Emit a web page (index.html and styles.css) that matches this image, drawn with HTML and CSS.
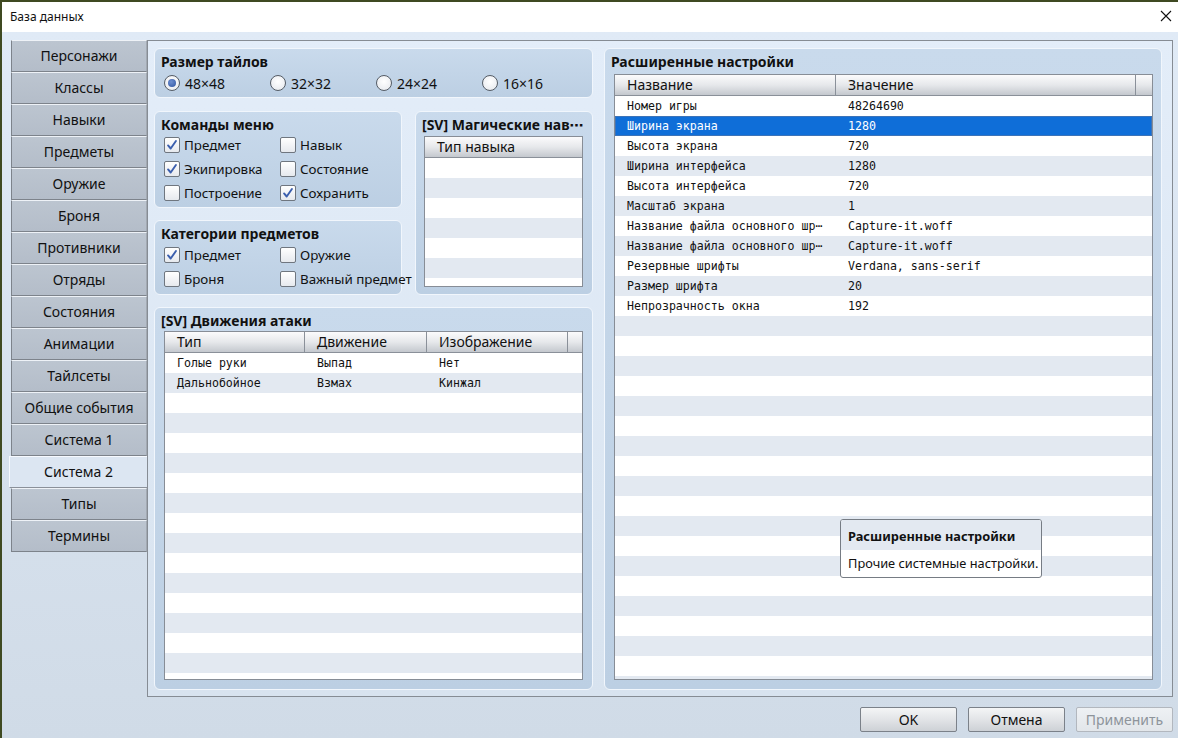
FILE: index.html
```html
<!DOCTYPE html>
<html lang="ru">
<head>
<meta charset="utf-8">
<title>База данных</title>
<link rel="stylesheet" href="styles.css">
</head>
<body>
<div class="window">
  <div class="titlebar">
    <span class="title">База данных</span>
    <svg class="close" width="12" height="12" viewBox="0 0 12 12"><path d="M1 1 L11 11 M11 1 L1 11" stroke="#111" stroke-width="1.1" fill="none"/></svg>
  </div>
  <div class="content">
    <div class="main">
      <div class="tabs">
        <div class="tab">Персонажи</div>
        <div class="tab">Классы</div>
        <div class="tab">Навыки</div>
        <div class="tab">Предметы</div>
        <div class="tab">Оружие</div>
        <div class="tab">Броня</div>
        <div class="tab">Противники</div>
        <div class="tab">Отряды</div>
        <div class="tab">Состояния</div>
        <div class="tab">Анимации</div>
        <div class="tab">Тайлсеты</div>
        <div class="tab">Общие события</div>
        <div class="tab">Система 1</div>
        <div class="tab active">Система 2</div>
        <div class="tab">Типы</div>
        <div class="tab">Термины</div>
      </div>
      <div class="panel">
        <div class="leftcol">
          <div class="group g-tiles">
            <div class="gtitle">Размер тайлов</div>
            <div class="radios">
              <label class="radio"><span class="rbox checked"></span>48×48</label>
              <label class="radio"><span class="rbox"></span>32×32</label>
              <label class="radio"><span class="rbox"></span>24×24</label>
              <label class="radio"><span class="rbox"></span>16×16</label>
            </div>
          </div>
          <div class="midrow">
            <div class="subcol">
              <div class="group g-menu">
                <div class="gtitle">Команды меню</div>
                <div class="checks tight">
                  <label class="check"><span class="cbox"><svg viewBox="0 0 16 16"><path d="M3.5 8.5 L6.5 12 L12.5 3.5"/></svg></span>Предмет</label>
                  <label class="check"><span class="cbox"></span>Навык</label>
                  <label class="check"><span class="cbox"><svg viewBox="0 0 16 16"><path d="M3.5 8.5 L6.5 12 L12.5 3.5"/></svg></span>Экипировка</label>
                  <label class="check"><span class="cbox"></span>Состояние</label>
                  <label class="check"><span class="cbox"></span>Построение</label>
                  <label class="check"><span class="cbox"><svg viewBox="0 0 16 16"><path d="M3.5 8.5 L6.5 12 L12.5 3.5"/></svg></span>Сохранить</label>
                </div>
              </div>
              <div class="group g-cats">
                <div class="gtitle">Категории предметов</div>
                <div class="checks">
                  <label class="check"><span class="cbox"><svg viewBox="0 0 16 16"><path d="M3.5 8.5 L6.5 12 L12.5 3.5"/></svg></span>Предмет</label>
                  <label class="check"><span class="cbox"></span>Оружие</label>
                  <label class="check"><span class="cbox"></span>Броня</label>
                  <label class="check"><span class="cbox"></span>Важный предмет</label>
                </div>
              </div>
            </div>
            <div class="group g-magic">
              <div class="gtitle">[SV] Магические нав⋯</div>
              <div class="table t-magic">
                <div class="thead"><div class="th">Тип навыка</div></div>
                <div class="tbody"></div>
              </div>
            </div>
          </div>
          <div class="group g-attack">
            <div class="gtitle">[SV] Движения атаки</div>
            <div class="table t-attack">
              <div class="thead">
                <div class="th">Тип</div>
                <div class="th">Движение</div>
                <div class="th">Изображение</div>
                <div class="th last"></div>
              </div>
              <div class="tbody">
                <div class="tr"><div class="td">Голые руки</div><div class="td">Выпад</div><div class="td">Нет</div><div class="td"></div></div>
                <div class="tr"><div class="td">Дальнобойное</div><div class="td">Взмах</div><div class="td">Кинжал</div><div class="td"></div></div>
              </div>
            </div>
          </div>
        </div>
        <div class="group g-adv">
          <div class="gtitle">Расширенные настройки</div>
          <div class="table t-adv">
            <div class="thead">
              <div class="th">Название</div>
              <div class="th">Значение</div>
              <div class="th last"></div>
            </div>
            <div class="tbody">
              <div class="tr"><div class="td">Номер игры</div><div class="td">48264690</div><div class="td"></div></div>
              <div class="tr selected"><div class="td">Ширина экрана</div><div class="td">1280</div><div class="td"></div></div>
              <div class="tr"><div class="td">Высота экрана</div><div class="td">720</div><div class="td"></div></div>
              <div class="tr"><div class="td">Ширина интерфейса</div><div class="td">1280</div><div class="td"></div></div>
              <div class="tr"><div class="td">Высота интерфейса</div><div class="td">720</div><div class="td"></div></div>
              <div class="tr"><div class="td">Масштаб экрана</div><div class="td">1</div><div class="td"></div></div>
              <div class="tr"><div class="td">Название файла основного шр⋯</div><div class="td">Capture-it.woff</div><div class="td"></div></div>
              <div class="tr"><div class="td">Название файла основного шр⋯</div><div class="td">Capture-it.woff</div><div class="td"></div></div>
              <div class="tr"><div class="td">Резервные шрифты</div><div class="td">Verdana, sans-serif</div><div class="td"></div></div>
              <div class="tr"><div class="td">Размер шрифта</div><div class="td">20</div><div class="td"></div></div>
              <div class="tr"><div class="td">Непрозрачность окна</div><div class="td">192</div><div class="td"></div></div>
            </div>
          </div>
          <div class="tooltip">
            <div class="tt-head">Расширенные настройки</div>
            <div class="tt-body">Прочие системные настройки.</div>
          </div>
        </div>
      </div>
    </div>
    <div class="buttons">
      <button class="btn">OK</button>
      <button class="btn">Отмена</button>
      <button class="btn disabled">Применить</button>
    </div>
  </div>
</div>
</body>
</html>
```
FILE: styles.css
```css
html, body {
  margin: 0;
  padding: 0;
}
body {
  width: 1178px;
  height: 738px;
  overflow: hidden;
  background: #3f4a22;
  font-family: "Noto Sans", "DejaVu Sans", sans-serif;
  color: #111;
}
.window {
  margin: 2px 0 0 2px;
  width: 1176px;
  height: 736px;
  display: flex;
  flex-direction: column;
}
.titlebar {
  height: 30px;
  flex: none;
  background: #fff;
  display: flex;
  align-items: center;
  justify-content: space-between;
  padding: 0 4px 0 8px;
  box-sizing: border-box;
}
.title {
  font-size: 12px;
  margin-top: -1px;
}
.close {
  width: 12px;
  height: 12px;
  margin-right: 2px;
  margin-top: -2px;
}
.content {
  flex: 1;
  background: linear-gradient(#e0eaf6, #d0dbe7);
  padding: 8px 0 0 9px;
  box-sizing: border-box;
  display: flex;
  flex-direction: column;
}
.main {
  display: flex;
  height: 657px;
}
.tabs {
  width: 136px;
  flex: none;
  display: flex;
  flex-direction: column;
}
.tab {
  height: 32px;
  box-sizing: border-box;
  background: linear-gradient(#bcc5d0, #b4bdc9);
  border-top: 1px solid #eef2f7;
  border-left: 1px solid #7d838b;
  border-bottom: 1px solid #7d838b;
  border-right: 1px solid #a2a9b2;
  font-size: 14px;
  line-height: 29px;
  text-align: center;
}
.tab.active {
  background: #dce6f2;
  margin-left: -2px;
  border-left: 1px solid #f7faff;
  border-top: 1px solid #f7faff;
  border-bottom: 1px solid #8a9099;
  border-right: none;
}
.panel {
  width: 1026px;
  flex: none;
  box-sizing: border-box;
  border: 1px solid #868c94;
  background: linear-gradient(#e3edf9, #d8e3ef);
  padding: 7px 10px 6px 6px;
  display: flex;
}
.leftcol {
  width: 439px;
  flex: none;
  display: flex;
  flex-direction: column;
}
.group {
  box-sizing: border-box;
  border: 1px solid #f1f6fc;
  border-radius: 6px;
  background: linear-gradient(#c9daec, #bccfe3);
  display: flex;
  flex-direction: column;
}
.gtitle {
  font-size: 14px;
  font-weight: bold;
  line-height: 18px;
  padding: 4px 0 0 6px;
  white-space: nowrap;
  flex: none;
}
.g-tiles {
  height: 50px;
}
.radios {
  display: grid;
  grid-template-columns: repeat(4, 106px);
  height: 24px;
  padding-left: 9px;
}
.radio {
  display: flex;
  align-items: center;
  gap: 5px;
  font-size: 14px;
}
.rbox {
  width: 16px;
  height: 16px;
  box-sizing: border-box;
  border-radius: 50%;
  border: 1px solid #555c65;
  background: radial-gradient(circle at 50% 40%, #ffffff, #e4e7ec);
  display: flex;
  align-items: center;
  justify-content: center;
}
.rbox.checked::after {
  content: "";
  width: 8px;
  height: 8px;
  border-radius: 50%;
  background: radial-gradient(circle at 40% 35%, #6d8fd0, #2f54a0);
}
.midrow {
  display: flex;
  margin-top: 13px;
  height: 184px;
  gap: 13px;
}
.subcol {
  width: 248px;
  display: flex;
  flex-direction: column;
  gap: 12px;
  position: relative;
  z-index: 1;
}
.g-menu {
  height: 97px;
}
.g-cats {
  height: 75px;
}
.checks {
  display: grid;
  grid-template-columns: 116px auto;
  grid-auto-rows: 24px;
  padding-left: 9px;
}
.checks.tight {
  margin-top: -1px;
}
.check {
  display: flex;
  align-items: center;
  gap: 4px;
  font-size: 13.4px;
  white-space: nowrap;
}
.cbox {
  width: 16px;
  height: 16px;
  flex: none;
  box-sizing: border-box;
  border: 1px solid #6f767f;
  border-radius: 2px;
  background: linear-gradient(#ffffff, #e6e9ee);
  display: flex;
}
.cbox svg {
  width: 14px;
  height: 14px;
}
.cbox path {
  fill: none;
  stroke: #3b5fae;
  stroke-width: 2.2;
  stroke-linecap: round;
  stroke-linejoin: round;
}
.g-magic {
  width: 178px;
}
.g-attack {
  margin-top: 12px;
  height: 383px;
}
.g-adv {
  position: relative;
  margin-left: 11px;
  width: 558px;
  height: 642px;
}
.table {
  flex: 1;
  border: 1px solid #878d96;
  background: #fff;
  display: flex;
  flex-direction: column;
  overflow: hidden;
}
.t-magic {
  margin: 2px 9px 7px 8px;
}
.t-attack {
  margin: 1px 9px 9px 9px;
}
.t-adv {
  margin: 3px 8px 9px 9px;
}
.thead {
  display: grid;
  height: 21px;
  box-sizing: border-box;
  border-bottom: 1px solid #8a9099;
  background: linear-gradient(#fbfbfc, #e6e8eb 50%, #c4c8ce);
  flex: none;
}
.th {
  font-size: 14px;
  line-height: 20px;
  padding-left: 12px;
  border-right: 1px solid #8a9099;
  white-space: nowrap;
  overflow: hidden;
}
.t-magic .th {
  border-right: none;
}
.th.last {
  border-right: none;
}
.tbody {
  flex: 1;
  background: repeating-linear-gradient(#ffffff 0 20px, #e3e9f1 20px 40px);
}
.tr {
  display: grid;
  height: 20px;
}
.td {
  font-family: "DejaVu Sans Mono", "Liberation Mono", monospace;
  font-size: 11.6px;
  line-height: 20px;
  padding-left: 12px;
  white-space: nowrap;
  overflow: hidden;
}
.t-attack .thead,
.t-attack .tr {
  grid-template-columns: 140px 122px 141px 1fr;
}
.t-adv .thead,
.t-adv .tr {
  grid-template-columns: 221px 300px 1fr;
}
.t-magic .thead {
  grid-template-columns: 1fr;
}
.tr.selected {
  background: #0f6ed8;
  color: #fff;
  box-shadow: inset 0 0 0 1px #3c73b8;
}
.tooltip {
  position: absolute;
  left: 235px;
  top: 470px;
  width: 202px;
  height: 59px;
  box-sizing: border-box;
  border: 1px solid #767c84;
  border-radius: 3px;
  background: #fff;
  overflow: hidden;
  font-size: 13px;
  white-space: nowrap;
}
.tt-head {
  background: #e3e9f1;
  height: 30px;
  line-height: 32px;
  padding-left: 7px;
  font-weight: bold;
  font-size: 12.8px;
}
.tt-body {
  line-height: 26px;
  padding-left: 7px;
  font-size: 12.8px;
}
.buttons {
  display: flex;
  justify-content: flex-end;
  gap: 11px;
  margin-top: 10px;
  padding-right: 5px;
}
.btn {
  width: 97px;
  height: 25px;
  box-sizing: border-box;
  border: 1px solid #7b8189;
  border-radius: 2px;
  background: linear-gradient(#f4f5f6, #e2e4e7 50%, #cdd1d6);
  font-family: "Noto Sans", "DejaVu Sans", sans-serif;
  font-size: 14px;
  color: #111;
  padding: 0;
}
.btn.disabled {
  border-color: #b2b7be;
  background: linear-gradient(#eef1f4, #e2e6ea);
  color: #8e949b;
}
```
